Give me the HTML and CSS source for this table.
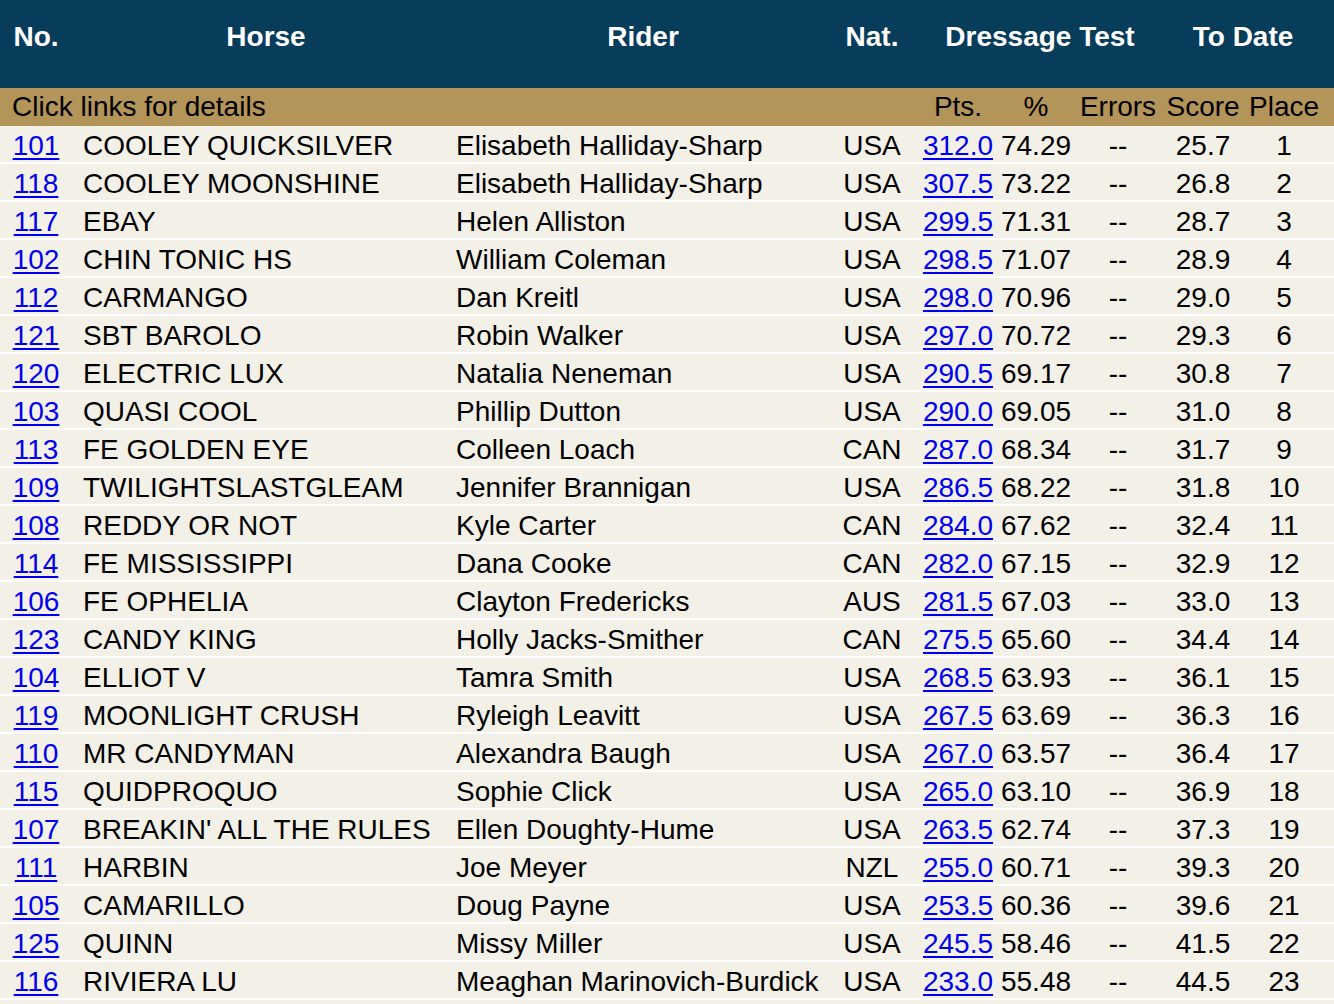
FILE: index.html
```html
<!DOCTYPE html>
<html lang="en">
<head>
<meta charset="utf-8">
<title>Dressage Results</title>
<link rel="stylesheet" href="styles.css">
</head>
<body>
<table class="results">
  <colgroup>
    <col class="c-no"><col class="c-horse"><col class="c-rider"><col class="c-nat"><col class="c-pts"><col class="c-pct"><col class="c-err"><col class="c-score"><col class="c-place">
  </colgroup>
  <thead>
    <tr class="head">
      <th class="no">No.</th>
      <th>Horse</th>
      <th>Rider</th>
      <th class="nat">Nat.</th>
      <th colspan="3">Dressage Test</th>
      <th colspan="2" class="todate">To Date</th>
    </tr>
    <tr class="sub">
      <td colspan="4" class="hint">Click links for details</td>
      <td class="ctr">Pts.</td>
      <td class="ctr">%</td>
      <td class="ctr">Errors</td>
      <td class="ctr">Score</td>
      <td class="ctr place">Place</td>
    </tr>
  </thead>
  <tbody>
    <tr><td class="no"><a href="#">101</a></td><td class="horse">COOLEY QUICKSILVER</td><td class="rider">Elisabeth Halliday-Sharp</td><td class="nat">USA</td><td class="ctr"><a href="#">312.0</a></td><td class="ctr">74.29</td><td class="ctr">--</td><td class="ctr">25.7</td><td class="ctr place">1</td></tr>
    <tr><td class="no"><a href="#">118</a></td><td class="horse">COOLEY MOONSHINE</td><td class="rider">Elisabeth Halliday-Sharp</td><td class="nat">USA</td><td class="ctr"><a href="#">307.5</a></td><td class="ctr">73.22</td><td class="ctr">--</td><td class="ctr">26.8</td><td class="ctr place">2</td></tr>
    <tr><td class="no"><a href="#">117</a></td><td class="horse">EBAY</td><td class="rider">Helen Alliston</td><td class="nat">USA</td><td class="ctr"><a href="#">299.5</a></td><td class="ctr">71.31</td><td class="ctr">--</td><td class="ctr">28.7</td><td class="ctr place">3</td></tr>
    <tr><td class="no"><a href="#">102</a></td><td class="horse">CHIN TONIC HS</td><td class="rider">William Coleman</td><td class="nat">USA</td><td class="ctr"><a href="#">298.5</a></td><td class="ctr">71.07</td><td class="ctr">--</td><td class="ctr">28.9</td><td class="ctr place">4</td></tr>
    <tr><td class="no"><a href="#">112</a></td><td class="horse">CARMANGO</td><td class="rider">Dan Kreitl</td><td class="nat">USA</td><td class="ctr"><a href="#">298.0</a></td><td class="ctr">70.96</td><td class="ctr">--</td><td class="ctr">29.0</td><td class="ctr place">5</td></tr>
    <tr><td class="no"><a href="#">121</a></td><td class="horse">SBT BAROLO</td><td class="rider">Robin Walker</td><td class="nat">USA</td><td class="ctr"><a href="#">297.0</a></td><td class="ctr">70.72</td><td class="ctr">--</td><td class="ctr">29.3</td><td class="ctr place">6</td></tr>
    <tr><td class="no"><a href="#">120</a></td><td class="horse">ELECTRIC LUX</td><td class="rider">Natalia Neneman</td><td class="nat">USA</td><td class="ctr"><a href="#">290.5</a></td><td class="ctr">69.17</td><td class="ctr">--</td><td class="ctr">30.8</td><td class="ctr place">7</td></tr>
    <tr><td class="no"><a href="#">103</a></td><td class="horse">QUASI COOL</td><td class="rider">Phillip Dutton</td><td class="nat">USA</td><td class="ctr"><a href="#">290.0</a></td><td class="ctr">69.05</td><td class="ctr">--</td><td class="ctr">31.0</td><td class="ctr place">8</td></tr>
    <tr><td class="no"><a href="#">113</a></td><td class="horse">FE GOLDEN EYE</td><td class="rider">Colleen Loach</td><td class="nat">CAN</td><td class="ctr"><a href="#">287.0</a></td><td class="ctr">68.34</td><td class="ctr">--</td><td class="ctr">31.7</td><td class="ctr place">9</td></tr>
    <tr><td class="no"><a href="#">109</a></td><td class="horse">TWILIGHTSLASTGLEAM</td><td class="rider">Jennifer Brannigan</td><td class="nat">USA</td><td class="ctr"><a href="#">286.5</a></td><td class="ctr">68.22</td><td class="ctr">--</td><td class="ctr">31.8</td><td class="ctr place">10</td></tr>
    <tr><td class="no"><a href="#">108</a></td><td class="horse">REDDY OR NOT</td><td class="rider">Kyle Carter</td><td class="nat">CAN</td><td class="ctr"><a href="#">284.0</a></td><td class="ctr">67.62</td><td class="ctr">--</td><td class="ctr">32.4</td><td class="ctr place">11</td></tr>
    <tr><td class="no"><a href="#">114</a></td><td class="horse">FE MISSISSIPPI</td><td class="rider">Dana Cooke</td><td class="nat">CAN</td><td class="ctr"><a href="#">282.0</a></td><td class="ctr">67.15</td><td class="ctr">--</td><td class="ctr">32.9</td><td class="ctr place">12</td></tr>
    <tr><td class="no"><a href="#">106</a></td><td class="horse">FE OPHELIA</td><td class="rider">Clayton Fredericks</td><td class="nat">AUS</td><td class="ctr"><a href="#">281.5</a></td><td class="ctr">67.03</td><td class="ctr">--</td><td class="ctr">33.0</td><td class="ctr place">13</td></tr>
    <tr><td class="no"><a href="#">123</a></td><td class="horse">CANDY KING</td><td class="rider">Holly Jacks-Smither</td><td class="nat">CAN</td><td class="ctr"><a href="#">275.5</a></td><td class="ctr">65.60</td><td class="ctr">--</td><td class="ctr">34.4</td><td class="ctr place">14</td></tr>
    <tr><td class="no"><a href="#">104</a></td><td class="horse">ELLIOT V</td><td class="rider">Tamra Smith</td><td class="nat">USA</td><td class="ctr"><a href="#">268.5</a></td><td class="ctr">63.93</td><td class="ctr">--</td><td class="ctr">36.1</td><td class="ctr place">15</td></tr>
    <tr><td class="no"><a href="#">119</a></td><td class="horse">MOONLIGHT CRUSH</td><td class="rider">Ryleigh Leavitt</td><td class="nat">USA</td><td class="ctr"><a href="#">267.5</a></td><td class="ctr">63.69</td><td class="ctr">--</td><td class="ctr">36.3</td><td class="ctr place">16</td></tr>
    <tr><td class="no"><a href="#">110</a></td><td class="horse">MR CANDYMAN</td><td class="rider">Alexandra Baugh</td><td class="nat">USA</td><td class="ctr"><a href="#">267.0</a></td><td class="ctr">63.57</td><td class="ctr">--</td><td class="ctr">36.4</td><td class="ctr place">17</td></tr>
    <tr><td class="no"><a href="#">115</a></td><td class="horse">QUIDPROQUO</td><td class="rider">Sophie Click</td><td class="nat">USA</td><td class="ctr"><a href="#">265.0</a></td><td class="ctr">63.10</td><td class="ctr">--</td><td class="ctr">36.9</td><td class="ctr place">18</td></tr>
    <tr><td class="no"><a href="#">107</a></td><td class="horse">BREAKIN' ALL THE RULES</td><td class="rider">Ellen Doughty-Hume</td><td class="nat">USA</td><td class="ctr"><a href="#">263.5</a></td><td class="ctr">62.74</td><td class="ctr">--</td><td class="ctr">37.3</td><td class="ctr place">19</td></tr>
    <tr><td class="no"><a href="#">111</a></td><td class="horse">HARBIN</td><td class="rider">Joe Meyer</td><td class="nat">NZL</td><td class="ctr"><a href="#">255.0</a></td><td class="ctr">60.71</td><td class="ctr">--</td><td class="ctr">39.3</td><td class="ctr place">20</td></tr>
    <tr><td class="no"><a href="#">105</a></td><td class="horse">CAMARILLO</td><td class="rider">Doug Payne</td><td class="nat">USA</td><td class="ctr"><a href="#">253.5</a></td><td class="ctr">60.36</td><td class="ctr">--</td><td class="ctr">39.6</td><td class="ctr place">21</td></tr>
    <tr><td class="no"><a href="#">125</a></td><td class="horse">QUINN</td><td class="rider">Missy Miller</td><td class="nat">USA</td><td class="ctr"><a href="#">245.5</a></td><td class="ctr">58.46</td><td class="ctr">--</td><td class="ctr">41.5</td><td class="ctr place">22</td></tr>
    <tr><td class="no"><a href="#">116</a></td><td class="horse">RIVIERA LU</td><td class="rider">Meaghan Marinovich-Burdick</td><td class="nat">USA</td><td class="ctr"><a href="#">233.0</a></td><td class="ctr">55.48</td><td class="ctr">--</td><td class="ctr">44.5</td><td class="ctr place">23</td></tr>
  </tbody>
</table>
</body>
</html>
```

FILE: styles.css
```css
html {
  background: #f3f0e8;
}
body {
  margin: 0;
  background: #f3f0e8;
  font-family: "Liberation Sans", Arial, Helvetica, sans-serif;
  font-size: 28px;
  color: #000;
}
.results {
  width: 1334px;
  table-layout: fixed;
  border-collapse: separate;
  border-spacing: 0;
}
.c-no { width: 80px; }
.c-horse { width: 372px; }
.c-rider { width: 382px; }
.c-nat { width: 84px; }
.c-pts { width: 80px; }
.c-pct { width: 76px; }
.c-err { width: 88px; }
.c-score { width: 82px; }
.c-place { width: 90px; }

.results th,
.results td {
  padding: 0;
  line-height: 32px;
  white-space: nowrap;
  vertical-align: top;
}

.results .head th {
  background: #073c5b;
  color: #fff;
  font-weight: bold;
  text-align: center;
  padding: 21px 0 35px;
}
.results .head th.no { padding-right: 8px; }
.results .head th.nat { padding-right: 8px; }
.results .head th.todate { padding-right: 10px; }

.results .sub td {
  background: #b39459;
  padding: 3px 0;
}
.results .sub td.hint { padding-left: 12px; text-align: left; }
.results .sub td.place { padding-right: 10px; }

.results tbody td {
  background: #f3f0e8;
  padding: 4px 0 0;
  border-bottom: 2px solid #fff;
}

.results .ctr { text-align: center; }
.results tbody td.place { padding-right: 10px; }
.results tbody td.no { text-align: center; padding-right: 8px; }
.results tbody td.horse { padding-left: 3px; }
.results tbody td.rider { padding-left: 4px; }
.results tbody td.nat { text-align: center; padding-right: 8px; }

.results a {
  color: #0000ee;
  text-decoration: underline;
  text-underline-offset: 3px;
}
```
